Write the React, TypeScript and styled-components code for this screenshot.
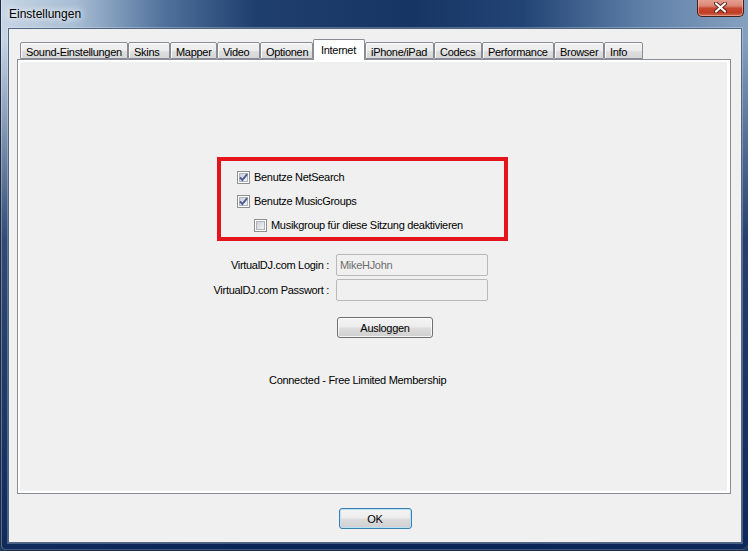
import React from 'react';
import styled, { createGlobalStyle } from 'styled-components';

const GlobalStyle = createGlobalStyle`
  html, body {
    margin: 0;
    padding: 0;
    background: #1b3a6a;
  }
  body {
    font-family: "Liberation Sans", Arial, sans-serif;
    font-size: 11px;
    letter-spacing: -0.3px;
    color: #000;
  }
  * {
    box-sizing: border-box;
  }
`;

const Window = styled.div`
  width: 748px;
  height: 551px;
  display: flex;
  flex-direction: column;
  padding: 0 6px 8px 8px;
  border-radius: 0 0 6px 6px;
  overflow: hidden;
  background:
    linear-gradient(180deg, rgba(12, 40, 90, 0) 0px, rgba(12, 40, 90, 0) 40px, rgba(12, 40, 90, 0.8) 240px, rgba(9, 36, 86, 0.97) 100%),
    linear-gradient(90deg, #c7d6e6 0%, #a8bdd4 10%, #4f719b 22%, #1f3f6e 34%, #163564 55%, #224475 70%, #5f80a8 86%, #86a0bf 100%);
  box-shadow:
    inset 1px 0 0 #1d2c42,
    inset 0 -1px 0 #1d2c42,
    inset 2px 0 0 rgba(255, 255, 255, 0.3),
    inset 0 -2px 0 rgba(255, 255, 255, 0.22);
`;

const TitleBar = styled.div`
  height: 28px;
  display: flex;
  align-items: flex-start;
  flex-shrink: 0;
`;

const Title = styled.div`
  margin: 7px 0 0 1px;
  font-size: 12px;
  line-height: 14px;
  letter-spacing: 0;
  color: #000;
  text-shadow: 0 0 6px #fff, 0 0 10px rgba(255, 255, 255, 0.85);
`;

const CloseButton = styled.div`
  width: 47px;
  height: 18px;
  margin: -1px -2px 0 auto;
  border: 1px solid #43201a;
  border-top: none;
  border-radius: 0 0 5px 5px;
  background: linear-gradient(180deg, #e6a395 0%, #db8775 40%, #c8472f 55%, #bf3d25 80%, #d46c52 100%);
  box-shadow: inset 0 0 0 1px rgba(255, 215, 205, 0.45);
  display: flex;
  align-items: center;
  justify-content: center;
`;

const Client = styled.div`
  flex: 1;
  display: flex;
  flex-direction: column;
  background: #f0f0f0;
  border: 1px solid #4f6580;
  box-shadow: 0 0 0 1px rgba(255, 255, 255, 0.25);
`;

const TabStrip = styled.div`
  height: 21px;
  margin: 10px 0 -1px 11px;
  display: flex;
  align-items: flex-end;
  position: relative;
  z-index: 1;
`;

const Tab = styled.div<{ $active?: boolean; $width: number }>`
  width: ${(p) => p.$width}px;
  height: ${(p) => (p.$active ? 21 : 17)}px;
  margin-bottom: ${(p) => (p.$active ? 0 : 1)}px;
  padding: ${(p) => (p.$active ? 3 : 2)}px 0 0 ${(p) => (p.$active ? 7 : 5)}px;
  line-height: 14px;
  white-space: nowrap;
  overflow: hidden;
  border: 1px solid #898c95;
  border-bottom: ${(p) => (p.$active ? 'none' : '1px solid #898c95')};
  border-radius: 2px 2px 0 0;
  background: ${(p) =>
    p.$active
      ? '#ffffff'
      : 'linear-gradient(180deg, #f2f2f2 0%, #ececec 50%, #dfdfdf 55%, #d6d6d6 100%)'};
  box-shadow: ${(p) => (p.$active ? 'none' : 'inset 1px 1px 0 #fbfbfb')};
`;

const Panel = styled.div`
  flex: 1;
  margin: 0 10px 0 8px;
  border: 1px solid #898c95;
  background: #f0f0f0;
  box-shadow: inset 2px 2px 0 #fff, inset -3px -2px 0 #fff;
  padding: 97px 0 0 194px;
  display: flex;
  flex-direction: column;
  align-items: flex-start;
`;

const Highlight = styled.div`
  width: 291px;
  height: 84px;
  margin-left: 5px;
  border: 4px solid #e3141c;
  padding: 6px 0 0 16px;
  display: flex;
  flex-direction: column;
  gap: 4px;
`;

const CheckRow = styled.label<{ $indent?: boolean }>`
  height: 20px;
  display: flex;
  align-items: center;
  gap: 4px;
  padding-left: ${(p) => (p.$indent ? 17 : 0)}px;
  line-height: 14px;
  white-space: nowrap;
`;

const LoginGrid = styled.div`
  margin-top: 13px;
  display: grid;
  grid-template-columns: 119px 152px;
  grid-template-rows: 22px 22px auto;
  column-gap: 5px;
  row-gap: 3px;
`;

const FieldLabel = styled.div`
  align-self: center;
  text-align: right;
  line-height: 14px;
  white-space: nowrap;
  padding-right: 2px;
`;

const Field = styled.input`
  width: 152px;
  height: 22px;
  margin: 0;
  padding: 0 3px;
  font-family: inherit;
  font-size: 11px;
  letter-spacing: -0.3px;
  color: #6d6d6d;
  background: #f0f0f0;
  border: 1px solid #b9b9b9;
  border-radius: 2px;
  outline: none;
`;

const Button = styled.button<{ $default?: boolean; $width: number }>`
  width: ${(p) => p.$width}px;
  height: 21px;
  margin: 0;
  padding: 0;
  font-family: inherit;
  font-size: 11px;
  letter-spacing: -0.3px;
  color: #000;
  border: 1px solid ${(p) => (p.$default ? '#3c7fb1' : '#707070')};
  border-radius: 3px;
  background: linear-gradient(180deg, #f4f4f4 0%, #ececec 48%, #dddddd 52%, #cfcfcf 100%);
  box-shadow: inset 0 0 0 1px ${(p) => (p.$default ? '#b6e1f6' : 'rgba(255, 255, 255, 0.75)')};
`;

const ButtonCell = styled.div`
  grid-column: 2;
  margin: 13px 0 0 1px;
`;

const Status = styled.div`
  margin: 35px 0 0 57px;
  line-height: 14px;
  white-space: nowrap;
`;

const Footer = styled.div`
  display: flex;
  justify-content: center;
  padding: 14px 0 13px;
`;

const Checkbox = ({ checked }: { checked?: boolean }) => (
  <svg width="13" height="13" viewBox="0 0 13 13" style={{ flexShrink: 0 }}>
    <defs>
      <linearGradient id="cbFill" x1="0" y1="0" x2="1" y2="1">
        <stop offset="0" stopColor="#c9cdd3" />
        <stop offset="1" stopColor="#f6f6f6" />
      </linearGradient>
    </defs>
    <rect x="0.5" y="0.5" width="12" height="12" fill="#fdfdfd" stroke="#8e8f8f" />
    <rect x="2.5" y="2.5" width="8" height="8" fill="url(#cbFill)" stroke="#b0b5bb" />
    {checked && (
      <path d="M3 6.4 L5.3 9 L10.2 3.2" fill="none" stroke="#4b5e98" strokeWidth="1.9" />
    )}
  </svg>
);

const tabs: [string, number][] = [
  ['Sound-Einstellungen', 108],
  ['Skins', 42],
  ['Mapper', 47],
  ['Video', 43],
  ['Optionen', 53],
  ['Internet', 52],
  ['iPhone/iPad', 69],
  ['Codecs', 48],
  ['Performance', 72],
  ['Browser', 50],
  ['Info', 39],
];

export default function App() {
  return (
    <>
      <GlobalStyle />
      <Window>
        <TitleBar>
          <Title>Einstellungen</Title>
          <CloseButton>
            <svg width="13" height="11" viewBox="0 0 13 11">
              <path d="M2 1.5 L11 9.5 M11 1.5 L2 9.5" stroke="#5a2019" strokeWidth="4" strokeLinecap="round" />
              <path d="M2 1.5 L11 9.5 M11 1.5 L2 9.5" stroke="#fff" strokeWidth="2.2" strokeLinecap="round" />
            </svg>
          </CloseButton>
        </TitleBar>
        <Client>
          <TabStrip>
            {tabs.map(([name, width]) => (
              <Tab key={name} $width={width} $active={name === 'Internet'}>
                {name}
              </Tab>
            ))}
          </TabStrip>
          <Panel>
            <Highlight>
              <CheckRow>
                <Checkbox checked />
                Benutze NetSearch
              </CheckRow>
              <CheckRow>
                <Checkbox checked />
                Benutze MusicGroups
              </CheckRow>
              <CheckRow $indent>
                <Checkbox />
                Musikgroup für diese Sitzung deaktivieren
              </CheckRow>
            </Highlight>
            <LoginGrid>
              <FieldLabel>VirtualDJ.com Login :</FieldLabel>
              <Field readOnly value="MikeHJohn" />
              <FieldLabel>VirtualDJ.com Passwort :</FieldLabel>
              <Field readOnly value="" type="password" />
              <ButtonCell>
                <Button $width={96}>Ausloggen</Button>
              </ButtonCell>
            </LoginGrid>
            <Status>Connected - Free Limited Membership</Status>
          </Panel>
          <Footer>
            <Button $default $width={73}>
              OK
            </Button>
          </Footer>
        </Client>
      </Window>
    </>
  );
}
